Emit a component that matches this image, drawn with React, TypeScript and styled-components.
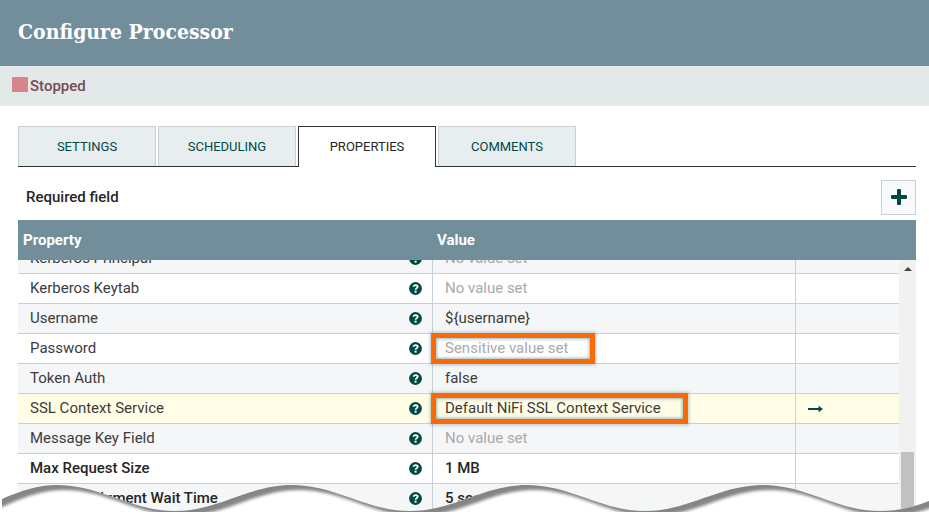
import React from "react";
import styled, { createGlobalStyle, css } from "styled-components";

const slate = "#728e9b";
const green = "#004a43";
const line = "#c7d0d5";

const GlobalStyle = createGlobalStyle`
  * { box-sizing: border-box; }
  body {
    margin: 0;
    background: #fff;
    color: #262626;
    font-family: Roboto, "Liberation Sans", sans-serif;
    font-size: 15px;
  }
  button { font: inherit; margin: 0; cursor: pointer; }
`;

const Dialog = styled.main`
  position: relative;
  overflow: hidden;
`;

const Header = styled.header`
  display: flex;
  align-items: center;
  height: 66px;
  padding: 0 18px 2px;
  background: ${slate};
`;

const Title = styled.h1`
  margin: 0;
  color: #fff;
  font-family: "Roboto Slab", "DejaVu Serif Condensed", "DejaVu Serif", serif;
  font-size: 21px;
  font-weight: 700;
  line-height: 28px;
`;

const StatusBar = styled.div`
  display: flex;
  align-items: center;
  gap: 2px;
  height: 40px;
  padding: 0 12px;
  background: #e3e8e9;
  color: #754b55;
  font-weight: 500;
`;

const StopMark = styled.span`
  width: 16px;
  height: 15px;
  margin-bottom: 4px;
  background: #d4868b;
`;

const Content = styled.div`
  padding: 20px 13px 0 18px;
`;

const TabList = styled.div`
  display: flex;
  gap: 2px;
  border-bottom: 1px solid #2e3436;
`;

const Tab = styled.button<{ $active?: boolean }>`
  width: 138px;
  height: 40px;
  padding: 0;
  border: 1px solid ${line};
  border-bottom: 0;
  background: #e8edf0;
  color: ${green};
  font-size: 13px;

  ${(p) =>
    p.$active &&
    css`
      height: 41px;
      margin-bottom: -1px;
      padding-bottom: 1px;
      border-color: #2e3436;
      background: #fff;
      color: #262626;
    `}
`;

const Toolbar = styled.div`
  display: flex;
  justify-content: space-between;
  padding: 13px 0 5px 8px;
  font-weight: 500;
  line-height: 34px;
`;

const AddButton = styled.button`
  display: flex;
  align-items: center;
  justify-content: center;
  width: 35px;
  height: 35px;
  padding: 0 0 2px;
  border: 1px solid ${line};
  background: #f9fafb;
  color: ${green};
`;

const TableFrame = styled.div`
  position: relative;
`;

const Table = styled.table`
  display: block;
`;

const columns = css`
  display: grid;
  grid-template-columns: 415fr 363fr 103fr;
`;

const Head = styled.thead`
  display: block;
  padding-right: 17px;
  background: ${slate};
  color: #fff;
`;

const HeadRow = styled.tr`
  ${columns}
`;

const HeadCell = styled.th`
  padding: 0 5px;
  font-weight: 700;
  line-height: 40px;
  text-align: left;

  & + & { padding-left: 4px; }
`;

const Body = styled.tbody`
  display: block;
  overflow: hidden;
  padding-right: 17px;
`;

const Row = styled.tr<{ $selected?: boolean; $required?: boolean }>`
  ${columns}
  height: 30px;
  border-bottom: 1px solid ${line};
  background: #fff;
  font-weight: ${(p) => (p.$required ? 500 : 400)};
  color: ${(p) => (p.$required ? "#262626" : "#3c3c3c")};

  &:nth-child(odd) { background: #f4f6f8; }
  &:first-child { margin-top: -16px; }
  &&:nth-child(n) { ${(p) => p.$selected && "background: #fffde6;"} }
`;

const Cell = styled.td`
  display: flex;
  align-items: center;
  justify-content: space-between;
  padding: 0 11px 0 12px;
  line-height: 29px;
  white-space: nowrap;

  & + & { border-left: 1px solid ${line}; margin-left: -1px; padding-left: 12px; }
`;

const IconButton = styled.button`
  display: flex;
  padding: 0;
  border: 0;
  background: none;
  color: ${green};
`;

const Value = styled.span<{ $muted?: boolean; $marked?: boolean }>`
  position: relative;
  color: ${(p) => (p.$muted ? "#a9a9a9" : "inherit")};

  ${(p) =>
    p.$marked &&
    css`
      &::after {
        content: "";
        position: absolute;
        z-index: 1;
        inset: -1px -27px -1px -14px;
        border: 5px solid #fb6a05;
        box-shadow: 0 0 3px 1px rgba(70, 125, 150, 0.4),
          inset 0 0 3px 1px rgba(70, 125, 150, 0.55);
      }
    `}
`;

const ScrollTrack = styled.div`
  position: absolute;
  top: 40px;
  right: 0;
  bottom: 0;
  display: flex;
  flex-direction: column;
  align-items: center;
  justify-content: space-between;
  width: 17px;
  padding-top: 6px;
  background: #f1f1f1;
`;

const ScrollThumb = styled.div`
  width: 13px;
  height: 62px;
  background: #c1c1c1;
`;

const Torn = styled.svg`
  position: absolute;
  z-index: 2;
  left: 0;
  bottom: 0;
  display: block;
  width: 100%;
  height: 32px;
`;

type Property = {
  name: string;
  value?: string;
  sensitive?: boolean;
  marked?: boolean;
  selected?: boolean;
  required?: boolean;
};

const properties: Property[] = [
  { name: "Kerberos Principal" },
  { name: "Kerberos Keytab" },
  { name: "Username", value: "${username}" },
  { name: "Password", value: "Sensitive value set", sensitive: true, marked: true },
  { name: "Token Auth", value: "false" },
  { name: "SSL Context Service", value: "Default NiFi SSL Context Service", marked: true, selected: true },
  { name: "Message Key Field" },
  { name: "Max Request Size", value: "1 MB", required: true },
  { name: "Acknowledgment Wait Time", value: "5 secs", required: true },
];

const tabs = ["SETTINGS", "SCHEDULING", "PROPERTIES", "COMMENTS"];

const wave =
  "M2 17 C20 9 38 3 57 3 C101 3 131 29 175 29 C219 29 248 3 292 3 C336 3 366 29 410 29 C454 29 483 3 527 3 C571 3 601 29 645 29 C689 29 719 3 763 3 C807 3 836 29 880 29 C898 29 914 25 929 19";

const extendedWave = wave.replace("M2 17", "M-12 23 L2 17");

function HelpIcon() {
  return (
    <svg width="13" height="13" viewBox="0 0 13 13" aria-hidden="true">
      <circle cx="6.5" cy="6.5" r="6.4" fill="currentColor" />
      <path
        d="M4.3 4.7C4.8 3.6 5.5 3.1 6.5 3.1C7.8 3.1 8.7 3.8 8.7 4.8C8.7 6.1 6.6 6.2 6.6 7.8"
        fill="none"
        stroke="#fff"
        strokeWidth="1.8"
      />
      <rect x="5.6" y="8.7" width="2" height="1.9" fill="#fff" />
    </svg>
  );
}

function PlusIcon() {
  return (
    <svg width="16" height="16" viewBox="0 0 16 16" fill="currentColor" aria-hidden="true">
      <rect x="6" width="4" height="16" rx="1" />
      <rect y="6" width="16" height="4" rx="1" />
    </svg>
  );
}

function ArrowIcon() {
  return (
    <svg width="15" height="8" viewBox="0 0 15 8" fill="currentColor" aria-hidden="true">
      <path d="M0 3H10.5V0.8L15 4L10.5 7.2V5H0Z" />
    </svg>
  );
}

function TornEdge() {
  return (
    <Torn viewBox="0 0 929 32" preserveAspectRatio="none" aria-hidden="true">
      <defs>
        <clipPath id="below">
          <path d={`${wave} V30 H2 Z`} />
        </clipPath>
        <filter id="soft" x="-5%" y="-50%" width="110%" height="200%">
          <feGaussianBlur stdDeviation="1.7" />
        </filter>
      </defs>
      <path d={`${wave} V32 H0 V18 Z`} fill="#fff" />
      <g clipPath="url(#below)">
        <path
          d={`${extendedWave} L960 10 V-20 H-12 Z`}
          fill="#858585"
          transform="translate(7 5)"
          filter="url(#soft)"
        />
      </g>
    </Torn>
  );
}

export default function App() {
  return (
    <>
      <GlobalStyle />
      <Dialog>
        <Header>
          <Title>Configure Processor</Title>
        </Header>
        <StatusBar>
          <StopMark />
          <span>Stopped</span>
        </StatusBar>
        <Content>
          <TabList role="tablist">
            {tabs.map((t) => (
              <Tab key={t} role="tab" aria-selected={t === "PROPERTIES"} $active={t === "PROPERTIES"}>
                {t}
              </Tab>
            ))}
          </TabList>
          <Toolbar>
            <span>Required field</span>
            <AddButton aria-label="Add property">
              <PlusIcon />
            </AddButton>
          </Toolbar>
          <TableFrame>
            <Table>
              <Head>
                <HeadRow>
                  <HeadCell scope="col">Property</HeadCell>
                  <HeadCell scope="col">Value</HeadCell>
                  <HeadCell />
                </HeadRow>
              </Head>
              <Body>
                {properties.map((p) => (
                  <Row key={p.name} $selected={p.selected} $required={p.required}>
                    <Cell>
                      {p.name}
                      <IconButton aria-label={`About ${p.name}`}>
                        <HelpIcon />
                      </IconButton>
                    </Cell>
                    <Cell>
                      <Value $muted={!p.value || p.sensitive} $marked={p.marked}>
                        {p.value ?? "No value set"}
                      </Value>
                    </Cell>
                    <Cell>
                      {p.selected && (
                        <IconButton aria-label="Go to service">
                          <ArrowIcon />
                        </IconButton>
                      )}
                    </Cell>
                  </Row>
                ))}
              </Body>
            </Table>
            <ScrollTrack>
              <svg width="8" height="5" viewBox="0 0 8 5" fill="#444" aria-hidden="true">
                <path d="M0 5L4 1L8 5Z" />
              </svg>
              <ScrollThumb />
            </ScrollTrack>
          </TableFrame>
        </Content>
        <TornEdge />
      </Dialog>
    </>
  );
}
